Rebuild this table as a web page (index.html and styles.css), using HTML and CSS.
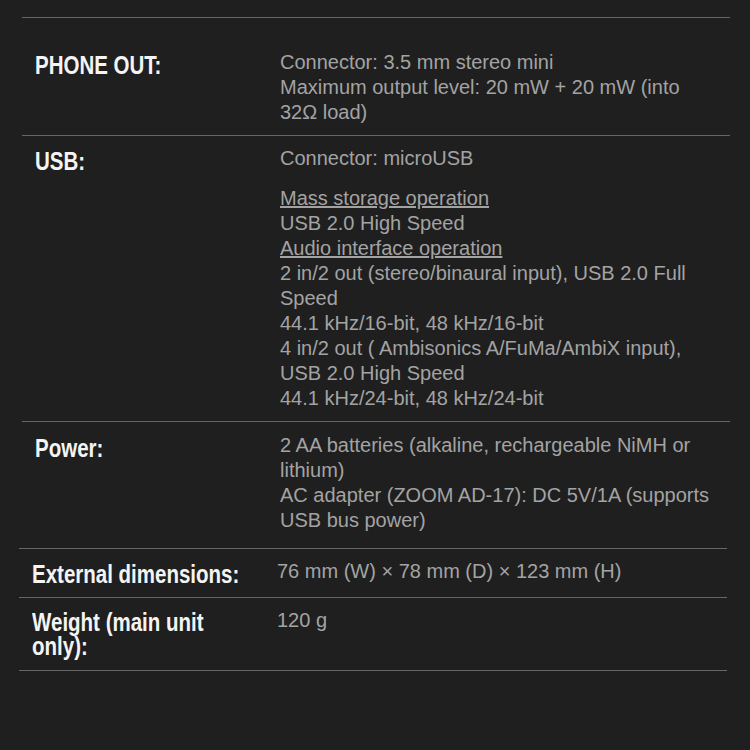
FILE: index.html
```html
<!DOCTYPE html>
<html lang="en">
<head>
<meta charset="utf-8">
<title>Specifications</title>
<link rel="stylesheet" href="styles.css">
</head>
<body>
<div class="page">
  <table class="spec spec-top">
    <tr class="row-first">
      <th><span class="lbl">PHONE OUT:</span></th>
      <td>Connector: 3.5 mm stereo mini<br>Maximum output level: 20 mW + 20 mW (into 32Ω load)</td>
    </tr>
    <tr class="row-usb">
      <th><span class="lbl">USB:</span></th>
      <td>
        <p class="para">Connector: microUSB</p>
        <p class="para-last"><span class="u">Mass storage operation</span><br>USB 2.0 High Speed<br><span class="u">Audio interface operation</span><br>2 in/2 out (stereo/binaural input), USB 2.0 Full Speed<br>44.1 kHz/16-bit, 48 kHz/16-bit<br>4 in/2 out ( Ambisonics A/FuMa/AmbiX input), USB 2.0 High Speed<br>44.1 kHz/24-bit, 48 kHz/24-bit</p>
      </td>
    </tr>
    <tr class="row-power">
      <th><span class="lbl">Power:</span></th>
      <td>2 AA batteries (alkaline, rechargeable NiMH or lithium)<br>AC adapter (ZOOM AD-17): DC 5V/1A (supports USB bus power)</td>
    </tr>
  </table>
  <table class="spec spec-bottom">
    <tr class="row-dim">
      <th><span class="lbl">External dimensions:</span></th>
      <td>76 mm (W) × 78 mm (D) × 123 mm (H)</td>
    </tr>
    <tr class="row-weight">
      <th><span class="lbl">Weight (main unit only):</span></th>
      <td>120 g</td>
    </tr>
  </table>
</div>
</body>
</html>
```
FILE: styles.css
```css
html, body {
  margin: 0;
  padding: 0;
  background: #1f1f1f;
}

.page {
  padding-top: 17px;
  height: 733px;
  background: #1f1f1f;
}

.spec {
  width: 708px;
  border-collapse: collapse;
  table-layout: fixed;
}

.spec-top {
  margin-left: 22px;
  border-top: 1px solid #666;
}

.spec-bottom {
  margin-left: 19px;
  border-top: 1px solid #666;
}

.spec th {
  width: 219px;
  text-align: left;
  vertical-align: top;
  padding: 13px 13px 11px 13px;
  font-family: "Liberation Sans", Arial, sans-serif;
  font-weight: 700;
  font-size: 25px;
  line-height: 24px;
  color: #f4f4f4;
  overflow: visible;
}

.lbl {
  display: block;
  width: 267px;
  transform: scaleX(0.82);
  transform-origin: left top;
}

.spec td {
  vertical-align: top;
  padding: 9px 13px 12px 13px;
  font-family: "Liberation Sans", Arial, sans-serif;
  font-size: 20px;
  line-height: 25px;
  color: #a3a3a3;
}

.spec tr {
  border-bottom: 1px solid #666;
}

.spec-top .row-power {
  border-bottom: none;
}

.spec-top .row-first th { padding-top: 35px; }
.spec-top .row-first td { padding-top: 32px; padding-bottom: 10px; }

.spec-top .row-usb th { padding-top: 13px; }
.spec-top .row-usb td { padding-top: 10px; padding-bottom: 10px; }

.spec-top .row-power th { padding-top: 14px; }
.spec-top .row-power td { padding-top: 11px; padding-bottom: 15px; }

.spec-bottom .row-dim th { padding-top: 13px; padding-bottom: 10px; }
.spec-bottom .row-dim td { padding-top: 10px; padding-bottom: 13px; }

.spec-bottom .row-weight th { padding-top: 12px; padding-bottom: 12px; }
.spec-bottom .row-weight td { padding-top: 10px; }

.para {
  margin: 0 0 15px 0;
}

.para-last {
  margin: 0;
}

.u {
  text-decoration: underline;
}
```
